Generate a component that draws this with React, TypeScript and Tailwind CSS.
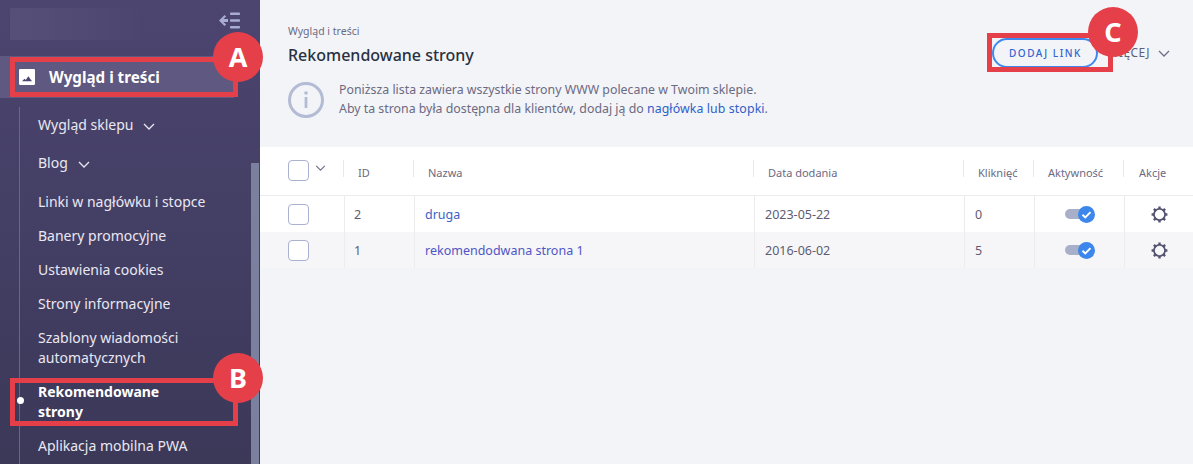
import React from "react";

const font = { fontFamily: '"Noto Sans", "Liberation Sans", sans-serif' };

function Chevron({ className }: { className?: string }) {
  return (
    <svg viewBox="0 0 12 7" className={className} fill="none" stroke="currentColor" strokeWidth="1.3">
      <path d="M1 1l5 5 5-5" />
    </svg>
  );
}

function SideItem({ children, py = "py-[7px]", chevron, bold }: { children: React.ReactNode; py?: string; chevron?: boolean; bold?: boolean }) {
  return (
    <div className={`relative flex items-center gap-[10px] pl-[18px] pr-[30px] ${py} text-[14px] leading-[20px] ${bold ? "font-bold text-white" : "text-[#e9e8f2]"}`}>
      <span className={bold ? "max-w-[130px]" : ""}>{children}</span>
      {chevron && <Chevron className="mt-[2px] h-[7px] w-[12px] text-[#e9e8f2]" />}
    </div>
  );
}

function Toggle() {
  return (
    <div className="relative h-[17px] w-[30px]">
      <div className="absolute left-0 top-[3px] h-[10px] w-[26px] rounded-full bg-[#a8b0c9]" />
      <svg viewBox="0 0 17 17" className="absolute right-0 top-0 h-[17px] w-[17px]">
        <circle cx="8.5" cy="8.5" r="8.5" fill="#3d86ec" />
        <path d="M4.5 8.8l2.8 2.7 5.2-5.4" fill="none" stroke="#fff" strokeWidth="1.9" />
      </svg>
    </div>
  );
}

function Gear() {
  return (
    <svg viewBox="0 0 24 24" className="h-[19px] w-[19px]" fill="none">
      <g stroke="#54536f">
        <circle cx="12" cy="12" r="7" strokeWidth="2.2" />
        <g strokeWidth="3">
          <path d="M12 2v3M12 19v3M2 12h3M19 12h3M4.9 4.9l2.2 2.2M16.9 16.9l2.2 2.2M4.9 19.1l2.2-2.2M16.9 7.1l2.2-2.2" />
        </g>
      </g>
    </svg>
  );
}

function Check() {
  return <div className="h-[21px] w-[21px] rounded-[4px] border border-[#aab2d2] bg-white" />;
}

function Header({ children, className }: { children?: React.ReactNode; className?: string }) {
  return (
    <div className={`ml-[-1px] mt-[-4px] h-[17px] border-l border-[#e8e8ec] pt-[4px] text-[11px] leading-[17px] text-[#6c6a82] ${className ?? "pl-[14px]"}`}>{children}</div>
  );
}

const cols = "grid grid-cols-[84px_70px_340px_210px_70px_90px_69px]";

function Row({ id, name, date, clicks, nameColor, className }: { id: string; name: string; date: string; clicks: string; nameColor: string; className?: string }) {
  const cell = "flex h-full items-center border-l-[1.5px] border-[#ececef]";
  return (
    <div className={`${cols} h-[36px] text-[12.5px] text-[#5e5c72] ${className ?? ""}`}>
      <div className="flex items-center pl-[28px]"><Check /></div>
      <div className={`${cell} pl-[9px] pt-[2px]`}>{id}</div>
      <div className={`${cell} pl-[10px] pt-[2px] ${nameColor}`}>{name}</div>
      <div className={`${cell} pl-[10px] pt-[2px]`}>{date}</div>
      <div className={`${cell} pl-[10px] pt-[2px]`}>{clicks}</div>
      <div className={`${cell} justify-center pr-[0px] pt-[1px]`}><Toggle /></div>
      <div className={`${cell} pl-[25px] pt-[1px]`}><Gear /></div>
    </div>
  );
}

function Circle({ children, className }: { children: React.ReactNode; className: string }) {
  return (
    <div className={`absolute flex h-[50px] w-[50px] items-center justify-center rounded-full bg-[#e5404a] text-[27px] font-bold text-white ${className}`}>
      {children}
    </div>
  );
}

function Box({ className }: { className: string }) {
  return <div className={`absolute border-[5px] border-[#e5404a] ${className}`} />;
}

export default function App() {
  return (
    <div className="relative flex h-[464px] w-[1193px] overflow-hidden bg-[#f3f4f8]" style={font}>
      <aside className="flex h-full w-[260px] shrink-0 flex-col overflow-hidden bg-gradient-to-b from-[#4c4570] to-[#3b3858]">
        <div className="flex h-[56px] shrink-0 items-start justify-between pl-[10px] pr-[20px] pt-[8px]">
          <div className="h-[32px] w-[130px] rounded-[2px] bg-gradient-to-r from-[#565078] to-[#4c4570]" />
          <svg viewBox="0 0 22 17" className="mt-[4px] h-[17px] w-[22px]" fill="#a9acd2">
            <path d="M6.5 3 1 8.5 6.5 14l1.6-1.6-2.6-2.5H10V7.100H5.500L8.100 4.600z" />
            <rect x="12" y="0.500" width="10" height="2.600" rx="0.800" />
            <rect x="12" y="7.200" width="10" height="2.600" rx="0.800" />
            <rect x="12" y="14" width="10" height="2.600" rx="0.800" />
          </svg>
        </div>
        <div className="flex h-[42px] w-[234px] shrink-0 items-center gap-[14px] bg-[#5f5880] pl-[19px] text-[15.2px] font-bold text-white">
          <svg viewBox="0 0 16 16" className="h-[16px] w-[16px]">
            <rect width="16" height="16" rx="1.2" fill="#fff" />
            <path d="M3 12.300l2.500-2.600 1.300 1.200 2.500-3.700 3.700 5.100z" fill="#4c4570" />
          </svg>
          <span>Wygląd i treści</span>
        </div>
        <div className="relative mt-[9px] flex flex-1 overflow-hidden">
          <div className="ml-[19px] w-[232px] border-l border-[#6a6689]">
            <div className="mt-[-1px]">
              <SideItem py="py-[9px]" chevron>Wygląd sklepu</SideItem>
            </div>
            <SideItem py="py-[9px]" chevron>Blog</SideItem>
            <div className="pt-[1px]">
              <SideItem py="pt-[9px] pb-[7px]">Linki w nagłówku i stopce</SideItem>
            </div>
            <SideItem>Banery promocyjne</SideItem>
            <SideItem>Ustawienia cookies</SideItem>
            <SideItem>Strony informacyjne</SideItem>
            <SideItem>Szablony wiadomości automatycznych</SideItem>
            <div className="relative">
              <div className="absolute left-[-3px] top-[22px] h-[7px] w-[7px] rounded-full bg-white" />
              <SideItem bold>Rekomendowane strony</SideItem>
            </div>
            <SideItem>Aplikacja mobilna PWA</SideItem>
          </div>
          <div className="mt-[56px] w-[8px] bg-[#7b809f]" />
        </div>
      </aside>

      <main className="flex min-w-0 flex-1 flex-col">
        <div className="flex h-[147px] shrink-0 items-start justify-between pl-[28px] pr-[23px]">
          <div>
            <div className="pt-[23px] text-[10.5px] leading-[16px] text-[#6c6a82]">Wygląd i treści</div>
            <h1 className="mt-[4px] text-[16px] font-medium leading-[24px] text-[#283142]">Rekomendowane strony</h1>
            <div className="mt-[15px] flex items-center gap-[15px]">
              <svg viewBox="0 0 36 36" className="h-[36px] w-[36px]">
                <circle cx="18" cy="18" r="16.5" fill="none" stroke="#b3bcd4" strokeWidth="3" />
                <rect x="16.6" y="15" width="2.8" height="11" fill="#b3bcd4" />
                <circle cx="18" cy="11" r="1.8" fill="#b3bcd4" />
              </svg>
              <div className="mt-[-2px] text-[12.35px] leading-[19px] text-[#6c6a82]">
                <div>Poniższa lista zawiera wszystkie strony WWW polecane w Twoim sklepie.</div>
                <div>Aby ta strona była dostępna dla klientów, dodaj ją do <span className="tracking-[0.1px] text-[#2f60c8]">nagłówka lub stopki</span>.</div>
              </div>
            </div>
          </div>
          <div className="mt-[38px] flex items-center gap-[9px]">
            <button className="h-[30px] w-[106px] rounded-full border-2 border-[#3f88ee] pt-[1px] text-[10px] font-medium tracking-[1.5px] text-[#2f66cf]">DODAJ LINK</button>
            <span className="text-[12px] tracking-[0.4px] text-[#5d6178]">WIĘCEJ</span>
            <Chevron className="ml-[-1px] h-[7px] w-[12px] text-[#6c7086]" />
          </div>
        </div>
        <div className="shrink-0 bg-white">
          <div className={`${cols} h-[49px] items-center border-b-[1.5px] border-[#ececef] pb-[2px]`}>
            <div className="flex items-center gap-[6px] pl-[28px]">
              <Check />
              <Chevron className="mb-[4px] h-[6px] w-[11px] text-[#6c7086]" />
            </div>
            <Header>ID</Header>
            <Header>Nazwa</Header>
            <Header>Data dodania</Header>
            <Header>Kliknięć</Header>
            <Header>Aktywność</Header>
            <Header className="pl-[15px]">Akcje</Header>
          </div>
          <Row id="2" name="druga" date="2023-05-22" clicks="0" nameColor="text-[#3b63c7]" />
          <Row id="1" name="rekomendodwana strona 1" date="2016-06-02" clicks="5" nameColor="text-[#4f55c4]" className="bg-[#f6f6f8]" />
        </div>
      </main>

      <Box className="left-[10px] top-[57px] h-[40px] w-[228px]" />
      <Box className="left-[10px] top-[378px] h-[48px] w-[228px]" />
      <Box className="left-[987px] top-[33px] h-[39px] w-[126px]" />
      <Circle className="left-[213px] top-[32px]">A</Circle>
      <Circle className="left-[213px] top-[353px]">B</Circle>
      <Circle className="left-[1088px] top-[7px]">C</Circle>
    </div>
  );
}
